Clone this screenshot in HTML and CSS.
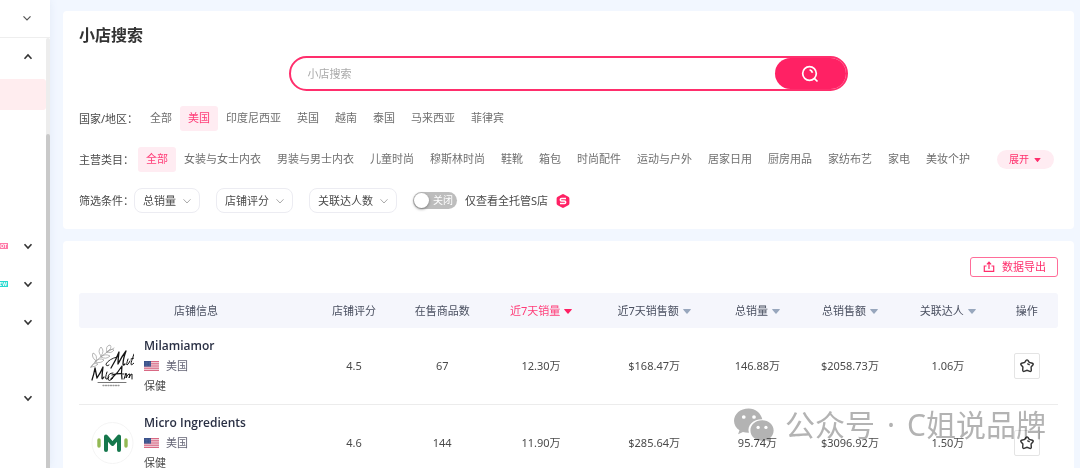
FILE: index.html
```html
<!DOCTYPE html>
<html lang="zh-CN">
<head>
<meta charset="utf-8">
<meta name="viewport" content="width=device-width, initial-scale=1">
<title>小店搜索</title>
<link rel="stylesheet" href="styles.css">
</head>
<body>
<svg class="defs" aria-hidden="true">
  <symbol id="down" viewBox="0 0 10 10"><path d="M1.500 3.300 5 7l3.500-3.700" fill="none" stroke="currentColor"/></symbol>
  <symbol id="caret" viewBox="0 0 8 5"><path d="M.6 0h6.800q.8.100.3.700L4.500 4.600q-.5.500-1 0L.3.700Q-.2.100.6 0z" fill="currentColor"/></symbol>
  <symbol id="star" viewBox="0 0 14 14">
    <path d="M6 1.500Q7 .3 8 1.500l1.300 1.900 3.100.8q1.200.5.600 1.600l-1.900 2.300.2 3.300q-.1 1.300-1.400 1L7 11.300l-2.900 1.100q-1.300.2-1.400-1.100l.2-3.200L1 5.800Q.4 4.700 1.600 4.200l3.100-.8z" fill="none" stroke="currentColor" stroke-width="1.400"/>
    <path d="M7.300 4.700l2.400 1.200" fill="none" stroke="currentColor" stroke-width="1.300"/>
  </symbol>
  <symbol id="flag" viewBox="0 0 15 10">
    <path fill="#f3e4ea" d="M0 0h15v10H0z"/>
    <path stroke="#d65a78" stroke-width=".9" d="M0 .5h15M0 2.300h15M0 4.100h15M0 5.900h15M0 7.700h15M0 9.500h15"/>
    <path fill="#38508a" d="M0 0h7v5.600H0z"/>
    <path stroke="#8794ba" stroke-width=".5" stroke-dasharray=".6 .8" d="M.8 1.300h6M.8 2.800h6M.8 4.300h6"/>
  </symbol>
</svg>
<div class="app">
  <aside class="sidebar">
    <button class="side-head" aria-label="切换"><svg class="chev thin"><use href="#down"/></svg></button>
    <div class="side-body">
      <nav class="side-nav" aria-label="主导航">
        <button class="side-item" aria-label="收起"><svg class="chev up"><use href="#down"/></svg></button>
        <a class="side-item current" href="#" aria-label="小店搜索"></a>
        <a class="side-item" href="#" aria-label="菜单"></a>
        <a class="side-item" href="#" aria-label="菜单"></a>
        <a class="side-item" href="#" aria-label="菜单"></a>
        <button class="side-item" aria-label="展开"><span class="tag hot">HOT</span><svg class="chev"><use href="#down"/></svg></button>
        <button class="side-item" aria-label="展开"><span class="tag new">NEW</span><svg class="chev"><use href="#down"/></svg></button>
        <button class="side-item" aria-label="展开"><svg class="chev"><use href="#down"/></svg></button>
        <a class="side-item" href="#" aria-label="菜单"></a>
        <button class="side-item" aria-label="展开"><svg class="chev"><use href="#down"/></svg></button>
      </nav>
      <div class="track"><div class="thumb"></div></div>
    </div>
  </aside>
  <main class="main">
    <section class="card">
      <h1>小店搜索</h1>
      <form class="search">
        <input type="text" placeholder="小店搜索" aria-label="小店搜索">
        <button type="button" aria-label="搜索">
          <svg viewBox="0 0 18 18" fill="none" stroke="#fff" stroke-width="1.700"><circle cx="8.500" cy="8.500" r="6.800"/><path d="M13.300 13.300l3.200 3.200M8.600 4.800q2.300.7 2.900 3"/></svg>
        </button>
      </form>
      <div class="filters">
        <div class="row">
          <span class="label wide">国家/地区：</span>
          <div class="pills"><a href="#">全部</a><a href="#" class="on">美国</a><a href="#">印度尼西亚</a><a href="#">英国</a><a href="#">越南</a><a href="#">泰国</a><a href="#">马来西亚</a><a href="#">菲律宾</a></div>
        </div>
        <div class="row">
          <span class="label wide">主营类目：</span>
          <div class="pills"><a href="#" class="on">全部</a><a href="#">女装与女士内衣</a><a href="#">男装与男士内衣</a><a href="#">儿童时尚</a><a href="#">穆斯林时尚</a><a href="#">鞋靴</a><a href="#">箱包</a><a href="#">时尚配件</a><a href="#">运动与户外</a><a href="#">居家日用</a><a href="#">厨房用品</a><a href="#">家纺布艺</a><a href="#">家电</a><a href="#">美妆个护</a></div>
          <button class="expand">展开<svg class="caret"><use href="#caret"/></svg></button>
        </div>
        <div class="row">
          <span class="label">筛选条件：</span>
          <div class="selects">
            <div class="select"><select aria-label="总销量"><option>总销量</option></select><svg class="chev"><use href="#down"/></svg></div>
            <div class="select"><select aria-label="店铺评分"><option>店铺评分</option></select><svg class="chev"><use href="#down"/></svg></div>
            <div class="select"><select aria-label="关联达人数"><option>关联达人数</option></select><svg class="chev"><use href="#down"/></svg></div>
            <label class="toggle"><input type="checkbox" role="switch"><span class="switch"><span class="knob"></span>关闭</span>仅查看全托管S店
              <svg class="s-icon" viewBox="0 0 14 14"><path d="M5.900.4q1.100-.6 2.200 0l4.200 2.300q1.100.6 1.100 1.800v5q0 1.200-1.100 1.800l-4.200 2.300q-1.100.6-2.200 0l-4.200-2.300Q.6 10.700.6 9.500v-5q0-1.200 1.100-1.800z" fill="#ff2164"/><path d="M10 4.400H5.600Q4.300 4.400 4.300 5.700T5.600 7h2.800q1.300 0 1.300 1.300T8.400 9.600H4" fill="none" stroke="#fff" stroke-width="1.500"/></svg>
            </label>
          </div>
        </div>
      </div>
    </section>
    <section class="card results">
      <div class="tools"><button class="export"><svg viewBox="0 0 12 12" fill="none" stroke="currentColor" stroke-width="1.200"><path d="M3.500 5H1.300v5.400h9.400V5H8.500M6 8V1.500M3.900 3.300 6 1.200l2.100 2.100"/></svg>数据导出</button></div>
      <table>
        <colgroup><col class="c-info"><col class="c-score"><col class="c-goods"><col class="c-week"><col class="c-weekamt"><col class="c-total"><col class="c-amt"><col class="c-people"><col></colgroup>
        <thead><tr>
          <th>店铺信息</th><th>店铺评分</th><th>在售商品数</th>
          <th class="sorted">近7天销量<svg class="caret"><use href="#caret"/></svg></th>
          <th>近7天销售额<svg class="caret"><use href="#caret"/></svg></th>
          <th>总销量<svg class="caret"><use href="#caret"/></svg></th>
          <th>总销售额<svg class="caret"><use href="#caret"/></svg></th>
          <th>关联达人<svg class="caret"><use href="#caret"/></svg></th>
          <th>操作</th>
        </tr></thead>
        <tbody>
          <tr>
            <td><div class="shop">
              <svg class="avatar" viewBox="0 0 44 44" fill="none" stroke-linecap="round" stroke-linejoin="round">
                <g stroke="#999" stroke-width=".7"><path d="M1 23Q9 12 24 4M6 17Q1 13 3 9q5 2 3 8zM11 12Q7 7 11 3q4 4 0 9zM17 8Q15 2 20 1q3 3-3 7zM5 18q6 2 9-2-5-3-9 2zM11 13q5 3 9-1-5-3-9 1zM17 8q4 2 7-2-4-2-7 2zM1 23q5 0 7-3-5-2-7 3z"/></g>
                <g stroke="#151515"><path stroke-width=".9" d="M19 21q-3 2-3-1 3-5 11-7"/><path stroke-width="1.300" d="M21 24q5-8 8-16-1 7-1 12 4-8 8-13-3 8-3 13 0 2 2 0"/><path stroke-width="1" d="M38 15q-2 6-1 6t3-4M44 10q-3 8-3 10t3-1M41 15l3-1"/><path stroke-width="1.300" d="M2 36q2-6 3-12 1 5 2 10 4-6 6-11-1 7-1 11 0 2 2-1"/><path stroke-width="1" d="M17 28q-2 6-1 7t3-2M23 29q-5 0-5 5t5 0"/><path stroke-width="1.200" d="M21 35q7-6 11-13-1 7 0 13M22 31q6-2 12-1"/><path stroke-width="1" d="M34 35l2-6q1 2 0 5 2-5 4-4l-1 4q2-5 3-4v5"/></g>
                <g stroke="#555" stroke-width=".8"><path d="M8 38.500h28"/><path stroke="#999" stroke-width="1.300" stroke-dasharray="1 1.500" d="M13 41.500h17"/></g>
              </svg>
              <div class="info"><a href="#" class="name">Milamiamor</a><span class="country"><svg class="flag"><use href="#flag"/></svg>美国</span><span>保健</span></div>
            </div></td>
            <td>4.5</td><td>67</td><td>12.30万</td><td>$168.47万</td><td>146.88万</td><td>$2058.73万</td><td>1.06万</td>
            <td><button class="fav" aria-label="收藏"><svg><use href="#star"/></svg></button></td>
          </tr>
          <tr>
            <td><div class="shop">
              <svg class="avatar" viewBox="0 0 44 44"><circle cx="22.500" cy="22" r="20.500" fill="#fff" stroke="#f1f1f1" stroke-width=".8"/><path d="M16 29V15.500l6.500 7.500 6.500-7.500V29" fill="none" stroke="#15774c" stroke-width="4" stroke-linecap="round" stroke-linejoin="round"/><path d="M9 19v6M36 19v6" stroke="#93b954" stroke-width="3.400" stroke-linecap="round"/></svg>
              <div class="info"><a href="#" class="name">Micro Ingredients</a><span class="country"><svg class="flag"><use href="#flag"/></svg>美国</span><span>保健</span></div>
            </div></td>
            <td>4.6</td><td>144</td><td>11.90万</td><td>$285.64万</td><td>95.74万</td><td>$3096.92万</td><td>1.50万</td>
            <td><button class="fav" aria-label="收藏"><svg><use href="#star"/></svg></button></td>
          </tr>
        </tbody>
      </table>
    </section>
  </main>
  <div class="watermark">
    <svg viewBox="0 0 42 34"><path d="M15 0C6.500 0 0 5.600 0 12.700c0 4.100 2.200 7.500 5.600 9.800L4.200 26.600l5-2.500c2 .6 3.900.9 6.100.8C13 17 20 10.800 29 11 27.500 4.500 21.800 0 15 0z"/><path d="M28.800 12.200c-6.900 0-12 4.500-12 10.400s5.100 10.500 12 10.500c1.500 0 2.900-.2 4.300-.6l3.900 2-1.100-3.400c2.900-2 4.700-5 4.700-8.500 0-5.900-5-10.400-11.800-10.400z"/><g class="eyes"><circle cx="10" cy="8.800" r="1.900"/><circle cx="20.500" cy="8.800" r="1.900"/><circle cx="24.700" cy="19.500" r="1.700"/><circle cx="32.700" cy="19.500" r="1.700"/></g></svg>
    <span>公众号</span><span>·</span><span>C姐说品牌</span>
  </div>
</div>
</body>
</html>
```
FILE: styles.css
```css
* { box-sizing: border-box; }

body {
  margin: 0;
  font: 11px/20px "Noto Sans", "Noto Sans CJK SC", sans-serif;
  color: #4a4a4a;
  background: #f2f7ff;
}

button, input, select { font: inherit; color: inherit; margin: 0; }
button { border: 0; padding: 0; background: none; cursor: pointer; }
a { color: inherit; text-decoration: none; }
svg { display: block; flex: none; }
.defs { position: absolute; width: 0; height: 0; }

.app { position: relative; display: flex; height: 100vh; overflow: hidden; }

/* Sidebar */
.sidebar {
  flex: none;
  display: flex;
  flex-direction: column;
  width: 50px;
  background: #fff;
  box-shadow: 0 0 8px #e2eaf6;
}
.side-head {
  display: flex;
  align-items: center;
  justify-content: flex-end;
  height: 38px;
  padding: 0 18px 2px 0;
  border-bottom: 1px solid #eee;
}
.chev { width: 10px; height: 10px; stroke-width: 1.6; color: #333; }
.chev.thin { stroke-width: 1.2; color: #555; }
.chev.up { transform: rotate(180deg); }
.side-body { flex: 1; min-height: 0; display: flex; }
.side-nav { flex: 1; overflow: hidden; }
.side-item {
  display: flex;
  align-items: center;
  justify-content: flex-end;
  gap: 15px;
  width: 100%;
  height: 38px;
  padding-right: 13px;
}
.side-item.current {
  height: 31px;
  margin: 3px 0;
  border-radius: 0 3px 3px 0;
  background: #ffedef;
}
.tag {
  padding: 0 1px;
  font-size: 5px;
  line-height: 6px;
  font-weight: 700;
  color: #fff;
}
.hot { background: #ff7aa8; }
.new { background: #26d9cf; }
.track { width: 4px; padding-top: 96px; background: #ededed; border-radius: 2px 2px 0 0; }
.thumb { height: 100%; background: #c9c9c9; border-radius: 2px 2px 0 0; }

/* Content */
.main {
  flex: 1;
  min-width: 0;
  display: flex;
  flex-direction: column;
  gap: 12px;
  padding: 11px 6px 0 13px;
}
.card { flex: none; padding: 12px 16px 16px; background: #fff; border-radius: 4px; }
h1 { margin: 0; font-size: 16px; line-height: 24px; color: #333; }

.search {
  display: flex;
  width: 57%;
  height: 35px;
  margin: 9px auto 15px;
  border: 2px solid #ff2e6c;
  border-radius: 18px;
  background: #fff;
}
.search input {
  flex: 1;
  min-width: 0;
  padding: 0 16px;
  border: 0;
  outline: 0;
  background: none;
}
.search input::placeholder { color: #aaa; opacity: 1; }
.search button {
  display: grid;
  place-items: center;
  width: 71px;
  border-radius: 16px;
  background: #ff2164;
}
.search svg { width: 18px; height: 18px; }

.filters { display: flex; flex-direction: column; gap: 16px; }
.row { display: flex; align-items: center; min-height: 25px; }
.label { flex: none; }
.label.wide { margin-right: 4px; }
.pills { display: flex; flex-wrap: wrap; }
.pills a { padding: 0 8px 1px; line-height: 24px; color: #707070; border-radius: 3px; }
.pills a.on { color: #ff3d78; background: #ffecf2; }
.expand {
  display: flex;
  align-items: center;
  gap: 5px;
  height: 19px;
  margin: 0 4px 0 auto;
  padding: 0 13px 0 12px;
  border-radius: 10px;
  font-size: 10px;
  line-height: 19px;
  color: #ff2e6c;
  background: #ffecf2;
}
.caret { width: 8px; height: 5px; }
.expand .caret { width: 7px; height: 4px; }

.selects { display: flex; gap: 16px; }
.select { position: relative; }
.select select {
  appearance: none;
  height: 25px;
  padding: 0 23px 0 8px;
  border: 1px solid #ececf2;
  border-radius: 8px;
  background: #fff;
}
.select .chev { position: absolute; right: 8px; top: 8px; stroke-width: 1; color: #aaa; pointer-events: none; }
.toggle { display: flex; align-items: center; gap: 8px; }
.toggle input { position: absolute; opacity: 0; }
.switch {
  display: flex;
  align-items: center;
  gap: 4px;
  width: 44px;
  height: 17px;
  padding-left: 1px;
  border-radius: 9px;
  font-size: 10px;
  line-height: 17px;
  color: #fff;
  background: #bdbdbd;
}
.knob { width: 15px; height: 15px; border-radius: 50%; background: #fff; box-shadow: 0 1px 3px #777; }
.s-icon { width: 14px; height: 14px; }

/* Results */
.results { padding-top: 16px; }
.tools { display: flex; justify-content: flex-end; margin-bottom: 16px; }
.export {
  display: flex;
  align-items: center;
  gap: 7px;
  height: 20px;
  padding: 0 11px 0 12px;
  border: 1px solid #ff6d99;
  border-radius: 3px;
  line-height: 18px;
  color: #ff2e6c;
}
.export svg { width: 12px; height: 12px; }
table { width: 100%; table-layout: fixed; border-collapse: separate; border-spacing: 0; text-align: center; }
.c-info { width: 23.9%; }
.c-score { width: 8.4%; }
.c-goods { width: 9.6%; }
.c-week { width: 10.6%; }
.c-weekamt { width: 12.5%; }
.c-total { width: 8.6%; }
.c-amt { width: 10.3%; }
.c-people { width: 9.7%; }
th {
  height: 35px;
  padding: 0;
  font-weight: 400;
  white-space: nowrap;
  color: #4a5060;
  background: #f5f6fc;
}
th:first-child { border-radius: 3px 0 0 3px; }
th:last-child { border-radius: 0 3px 3px 0; }
th .caret { display: inline-block; margin-left: 4px; vertical-align: 1px; color: #98a7bd; }
th.sorted { color: #ff3d78; }
th.sorted .caret { color: #ff2164; }
td { height: 77px; padding: 0; border-bottom: 1px solid #ececec; }
.shop { display: flex; align-items: center; gap: 10px; padding-left: 11px; text-align: left; }
.avatar { width: 44px; height: 44px; }
.info { display: flex; flex-direction: column; }
.name { font-family: "Open Sans", "Noto Sans CJK SC", sans-serif; font-size: 12px; font-weight: 600; color: #2a3044; }
.country { display: flex; align-items: center; gap: 7px; color: #667; }
.flag { width: 15px; height: 10px; }
.fav {
  display: inline-grid;
  place-items: center;
  width: 26px;
  height: 26px;
  border: 1px solid #e4e4e4;
  border-radius: 2px;
  vertical-align: middle;
}
.fav svg { width: 14px; height: 14px; color: #333; }

/* Account mark laid over the page */
.watermark {
  position: absolute;
  right: 34px;
  bottom: 23px;
  display: flex;
  align-items: center;
  gap: 12px;
  font-size: 30px;
  line-height: 40px;
  color: #b3b3b3;
  mix-blend-mode: multiply;
  pointer-events: none;
}
.watermark svg { width: 41px; height: 34px; margin-right: -2px; fill: currentColor; }
.eyes { fill: #fff; }
```
